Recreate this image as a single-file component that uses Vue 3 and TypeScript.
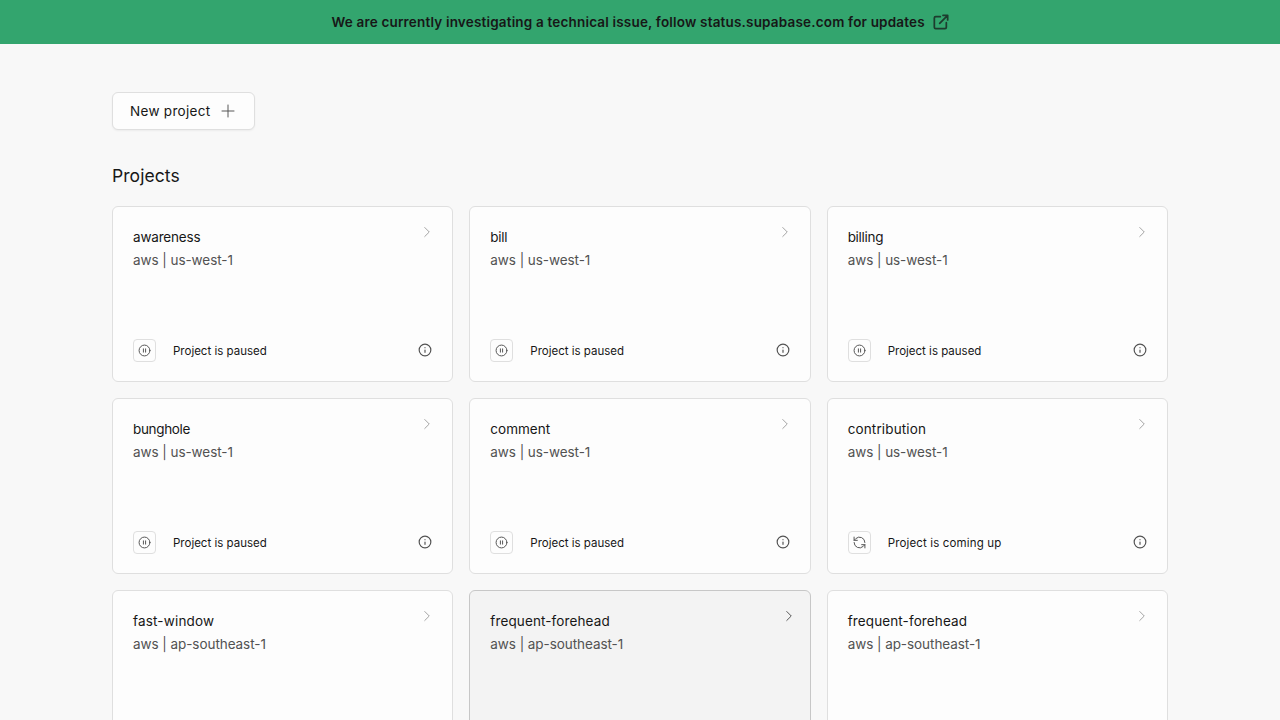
<script setup lang="ts">
interface Project {
  name: string
  tracking: number
  region: string
  status?: 'paused' | 'coming up'
  hovered?: boolean
}

const projects: Project[] = [
  { name: 'awareness', tracking: -0.18, region: 'us-west-1', status: 'paused' },
  { name: 'bill', tracking: -0.3, region: 'us-west-1', status: 'paused' },
  { name: 'billing', tracking: -0.3, region: 'us-west-1', status: 'paused' },
  { name: 'bunghole', tracking: -0.33, region: 'us-west-1', status: 'paused' },
  { name: 'comment', tracking: 0, region: 'us-west-1', status: 'paused' },
  { name: 'contribution', tracking: 0.14, region: 'us-west-1', status: 'coming up' },
  { name: 'fast-window', tracking: 0.18, region: 'ap-southeast-1' },
  { name: 'frequent-forehead', tracking: 0.12, region: 'ap-southeast-1', hovered: true },
  { name: 'frequent-forehead', tracking: 0.12, region: 'ap-southeast-1' },
]
</script>

<template>
  <div class="page">
    <header class="banner">
      <span class="banner-text">We are currently investigating a technical issue, follow status.supabase.com for updates</span>
      <svg class="icon external" viewBox="0 0 24 24" width="16" height="16" stroke-width="2.6">
        <path d="M20 13v7a2 2 0 0 1-2 2H4a2 2 0 0 1-2-2V6a2 2 0 0 1 2-2h7" />
        <path d="M15 2h7v7M10 14 22 2" />
      </svg>
    </header>
    <main class="content">
      <button class="new-project">
        <span>New project</span>
        <svg class="icon" viewBox="0 0 24 24" width="18" height="18" stroke-width="1.3">
          <path d="M12 4v16M4 12h16" />
        </svg>
      </button>
      <h1 class="heading">Projects</h1>
      <section class="grid">
        <article v-for="(project, i) in projects" :key="i" class="card" :class="{ hovered: project.hovered }">
          <div class="top">
            <div class="labels">
              <h2 class="name" :style="{ letterSpacing: project.tracking + 'px' }">{{ project.name }}</h2>
              <p class="region">aws | {{ project.region }}</p>
            </div>
            <svg class="icon chevron" viewBox="0 0 24 24" width="18" height="18" stroke-width="1.3">
              <path d="m9 18 6-6-6-6" />
            </svg>
          </div>
          <div v-if="project.status" class="status">
            <span class="badge">
              <svg v-if="project.status === 'paused'" class="icon" viewBox="0 0 24 24" width="13" height="13" stroke-width="1.8">
                <circle cx="12" cy="12" r="10" />
                <path d="M10 15V9M14 15V9" />
              </svg>
              <svg v-else class="icon" viewBox="0 0 24 24" width="13" height="13" stroke-width="1.8">
                <path d="M22 12A10 10 0 0 0 5 5L2 8" />
                <path d="M2 2v6h6M2 12a10 10 0 0 0 17 7l3-3" />
                <path d="M16 16h6v6" />
              </svg>
            </span>
            <span class="status-text" :class="{ wide: project.status === 'coming up' }">Project is {{ project.status }}</span>
            <svg class="icon info" viewBox="0 0 24 24" width="14" height="14" stroke-width="2">
              <circle cx="12" cy="12" r="10" />
              <path d="M12 16v-4M12 8h.01" />
            </svg>
          </div>
        </article>
      </section>
    </main>
  </div>
</template>

<style>
body {
  margin: 0;
  background: #f8f8f8;
}
</style>

<style scoped>
.page {
  height: 720px;
  overflow: hidden;
  background: #f8f8f8;
  color: #171717;
  font-family: Inter, "Liberation Sans", sans-serif;
  font-size: 13.5px;
  font-weight: 400;
}
.icon {
  display: block;
  flex: none;
  fill: none;
  stroke: currentColor;
  stroke-linecap: round;
  stroke-linejoin: round;
}
.banner {
  display: flex;
  align-items: center;
  justify-content: center;
  gap: 8px;
  height: 44px;
  background: #33a56e;
}
.banner-text {
  width: 593px;
  white-space: nowrap;
  font-weight: 600;
  line-height: 20px;
  letter-spacing: 0.18px;
}
.external {
  color: #1d3c2e;
}
.content {
  padding: 48px 112px 0;
}
.new-project {
  display: flex;
  align-items: center;
  justify-content: space-between;
  box-sizing: border-box;
  width: 143px;
  height: 38px;
  padding: 0 17px 0 17px;
  border: 1px solid #dfdfdf;
  border-radius: 6px;
  background: #fdfdfd;
  box-shadow: 0 1px 2px rgba(0, 0, 0, 0.05);
  color: #171717;
  font: inherit;
  letter-spacing: 0.3px;
  white-space: nowrap;
}
.new-project .icon {
  color: #525252;
}
.heading {
  margin: 32px 0 16px;
  font-size: 17.5px;
  font-weight: 400;
  line-height: 28px;
  letter-spacing: 0.06px;
}
.grid {
  display: grid;
  grid-template-columns: repeat(3, 1fr);
  gap: 16px;
}
.card {
  display: flex;
  flex-direction: column;
  justify-content: space-between;
  box-sizing: border-box;
  height: 176px;
  padding: 19px 20px;
  border: 1px solid #dfdfdf;
  border-radius: 6px;
  background: #fdfdfd;
}
.card.hovered {
  border-color: #c7c7c7;
  background: #f3f3f3;
}
.top {
  display: flex;
  justify-content: space-between;
}
.labels {
  padding-top: 1px;
}
.name,
.region {
  margin: 0;
  font-size: 13.5px;
  font-weight: 400;
  line-height: 21px;
}
.region {
  margin-top: 2px;
  color: #525252;
  letter-spacing: -0.06px;
}
.chevron {
  margin: -3px -4px 0 0;
  color: #a0a0a0;
}
.hovered .chevron {
  margin-right: -8px;
  color: #525252;
}
.status {
  display: flex;
  align-items: center;
}
.badge {
  display: flex;
  align-items: center;
  justify-content: center;
  box-sizing: border-box;
  width: 23px;
  height: 23px;
  border: 1px solid #dfdfdf;
  border-radius: 4px;
  color: #525252;
}
.status-text {
  margin-left: 17px;
  font-size: 11.5px;
  line-height: 16px;
}
.status-text.wide {
  letter-spacing: 0.15px;
}
.info {
  margin: 0 0 1px auto;
  color: #525252;
}
</style>
